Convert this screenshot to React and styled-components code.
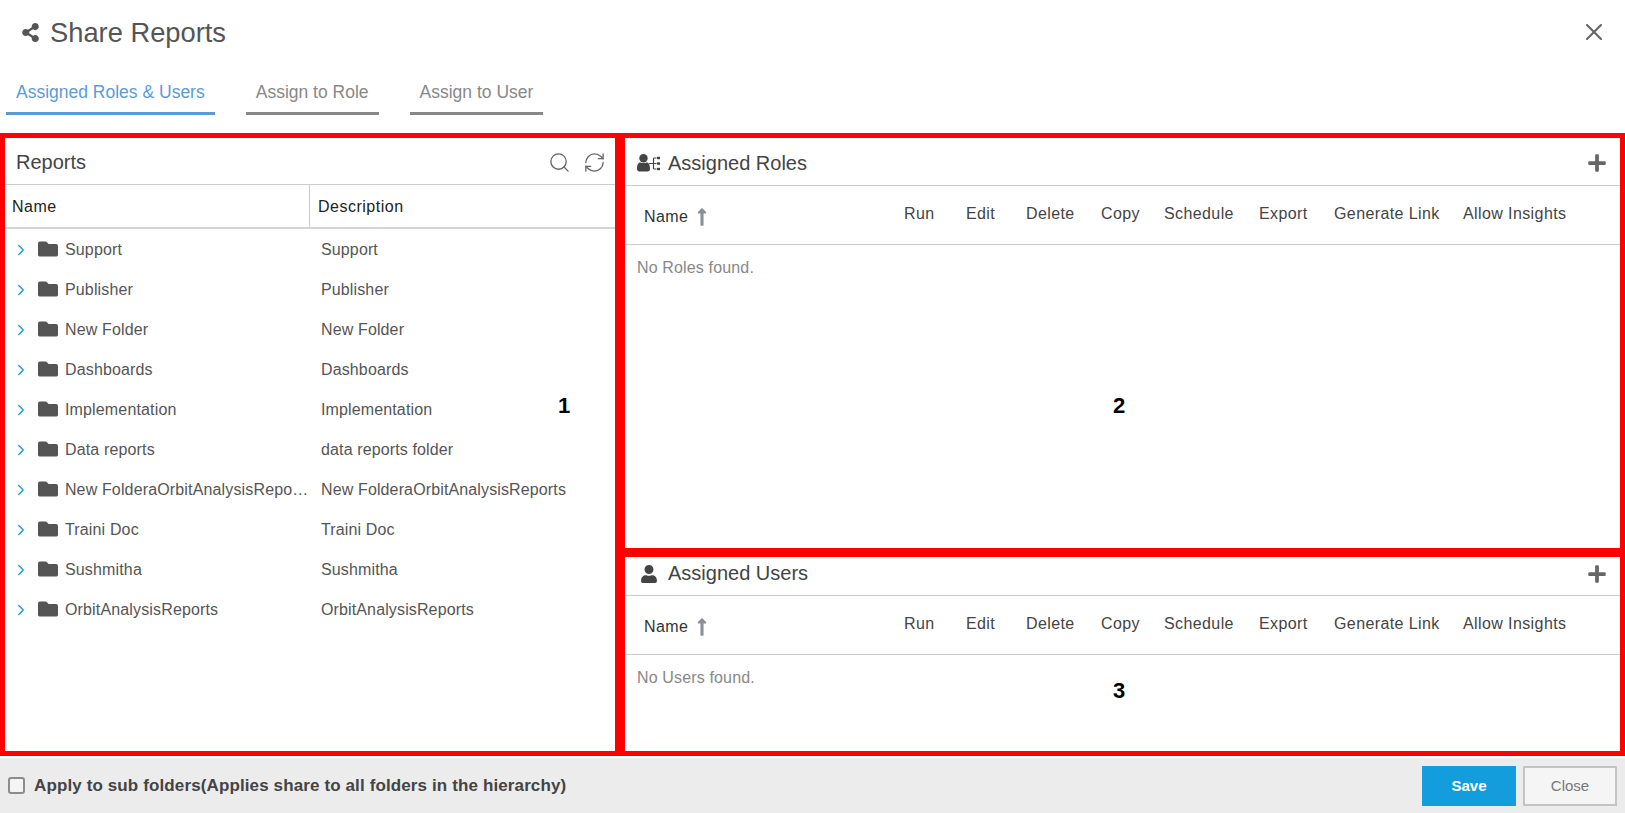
import React from 'react'
import styled, { createGlobalStyle } from 'styled-components'
import { FaShareAlt, FaFolder, FaPlus, FaUser, FaLongArrowAltUp } from 'react-icons/fa'
import { ChevronRight, RefreshCw, Search, X } from 'lucide-react'

const folders = [
    ['Support', 'Support'],
    ['Publisher', 'Publisher'],
    ['New Folder', 'New Folder'],
    ['Dashboards', 'Dashboards'],
    ['Implementation', 'Implementation'],
    ['Data reports', 'data reports folder'],
    ['New FolderaOrbitAnalysisReports', 'New FolderaOrbitAnalysisReports'],
    ['Traini Doc', 'Traini Doc'],
    ['Sushmitha', 'Sushmitha'],
    ['OrbitAnalysisReports', 'OrbitAnalysisReports'],
]

const permissions = ['Run', 'Edit', 'Delete', 'Copy', 'Schedule', 'Export', 'Generate Link', 'Allow Insights']

function RolesIcon() {
    return (
        <svg width="25" height="18" viewBox="0 0 25 18" fill="#444">
            <circle cx="6.5" cy="4.2" r="4.2" />
            <path d="M0 15c0-5 1.500-6.500 3.500-6.500 1 .8 5 .8 6 0 2 0 3.500 1.500 3.500 6.500 0 1.500-1 2.500-2.500 2.500h-8C1 17.500 0 16.500 0 15z" />
            <path d="M12 9.500h4.500M16.500 4v11M16.500 4h3M16.500 9.500h3M16.500 15h3" stroke="#444" strokeWidth="1.200" fill="none" />
            <rect x="20" y="2.800" width="3" height="2.400" />
            <rect x="20" y="8.300" width="3" height="2.400" />
            <rect x="20" y="13.800" width="3" height="2.400" />
        </svg>
    )
}

function AssignedTable({ empty }) {
    return (
        <>
            <TableHead>
                <NameHead>
                    Name
                    <FaLongArrowAltUp color="#8a9099" size={20} />
                </NameHead>
                <Permissions>
                    {permissions.map(item => (
                        <span key={item}>{item}</span>
                    ))}
                </Permissions>
            </TableHead>
            <EmptyText>{empty}</EmptyText>
        </>
    )
}

function App() {
    return (
        <Page>
            <GlobalStyle />
            <TitleBar>
                <Title>
                    <FaShareAlt size={19} color="#555" />
                    Share Reports
                </Title>
                <CloseIcon>
                    <X size={28} strokeWidth={1.8} color="#666" />
                </CloseIcon>
            </TitleBar>

            <Tabs>
                <Tab $active>Assigned Roles &amp; Users</Tab>
                <Tab>Assign to Role</Tab>
                <Tab>Assign to User</Tab>
            </Tabs>

            <Body>
                <ReportsPanel>
                    <ReportsHeader>
                        Reports
                        <HeaderTools>
                            <Search size={23} strokeWidth={1.4} />
                            <RefreshCw size={23} strokeWidth={1.4} />
                        </HeaderTools>
                    </ReportsHeader>
                    <ColumnHeads>
                        <ColumnName>Name</ColumnName>
                        <ColumnDescription>Description</ColumnDescription>
                    </ColumnHeads>
                    {folders.map(([name, description]) => (
                        <FolderRow key={name}>
                            <FolderName>
                                <ChevronRight size={18} color="#1a9bdc" strokeWidth={1.8} />
                                <FolderIcon><FaFolder size={20} color="#555" /></FolderIcon>
                                <FolderLabel>{name}</FolderLabel>
                            </FolderName>
                            <FolderDescription>{description}</FolderDescription>
                        </FolderRow>
                    ))}
                    <Marker $left={559} $top={268}>1</Marker>
                </ReportsPanel>

                <RightColumn>
                    <RolesPanel>
                        <AssignedHeader $height={47} $top={3} $bottom={0}>
                            <AssignedTitle>
                                <IconSlot><RolesIcon /></IconSlot>
                                Assigned Roles
                            </AssignedTitle>
                            <FaPlus size={20} color="#666" />
                        </AssignedHeader>
                        <AssignedTable empty="No Roles found." />
                        <Marker $left={494} $top={268}>2</Marker>
                    </RolesPanel>
                    <UsersPanel>
                        <AssignedHeader $height={38} $top={0} $bottom={5}>
                            <AssignedTitle>
                                <IconSlot><FaUser size={18} color="#444" /></IconSlot>
                                Assigned Users
                            </AssignedTitle>
                            <FaPlus size={20} color="#666" />
                        </AssignedHeader>
                        <AssignedTable empty="No Users found." />
                        <Marker $left={494} $top={134}>3</Marker>
                    </UsersPanel>
                </RightColumn>
            </Body>

            <Footer>
                <ApplyLabel>
                    <CheckBox />
                    Apply to sub folders(Applies share to all folders in the hierarchy)
                </ApplyLabel>
                <Buttons>
                    <SaveButton>Save</SaveButton>
                    <CloseButton>Close</CloseButton>
                </Buttons>
            </Footer>
        </Page>
    )
}

export default App

const GlobalStyle = createGlobalStyle`
    html, body {
        margin: 0;
        padding: 0;
        background: #fff;
    }
    * {
        box-sizing: border-box;
    }
`

const Page = styled.div`
    width: 1625px;
    height: 813px;
    display: flex;
    flex-direction: column;
    overflow: hidden;
    font-family: "Liberation Sans", Arial, sans-serif;
    color: #555;
`

const TitleBar = styled.div`
    height: 62px;
    display: flex;
    align-items: center;
    justify-content: space-between;
    padding: 3px 17px 0 21px;
`

const Title = styled.div`
    display: flex;
    align-items: center;
    gap: 10px;
    font-size: 27.3px;
    color: #555;
`

const CloseIcon = styled.div`
    display: flex;
    margin-top: -2px;
`

const Tabs = styled.div`
    height: 53px;
    display: flex;
    gap: 31px;
    padding-left: 6px;
`

const Tab = styled.div`
    height: 53px;
    padding: 20px 10px 0;
    font-size: 17.5px;
    color: ${props => (props.$active ? '#5b9bd5' : '#888')};
    border-bottom: 3px solid ${props => (props.$active ? '#5b9bd5' : '#888')};
`

const Body = styled.div`
    margin-top: 18px;
    height: 623px;
    display: grid;
    grid-template-columns: 620px 1005px;
`

const ReportsPanel = styled.div`
    position: relative;
    border: 5px solid #f00;
`

const ReportsHeader = styled.div`
    height: 47px;
    display: flex;
    align-items: center;
    justify-content: space-between;
    padding: 2px 9px 0 11px;
    font-size: 20px;
    color: #444;
    border-bottom: 1px solid #ccc;
`

const HeaderTools = styled.div`
    display: flex;
    gap: 12px;
    color: #666;
`

const ColumnHeads = styled.div`
    height: 44px;
    display: grid;
    grid-template-columns: 305px 1fr;
    border-bottom: 2px solid #d4d4d4;
    font-size: 16px;
    letter-spacing: 0.5px;
    color: #222;
`

const ColumnName = styled.div`
    display: flex;
    align-items: center;
    padding: 2px 0 0 7px;
    border-right: 1px solid #ccc;
`

const ColumnDescription = styled.div`
    display: flex;
    align-items: center;
    padding: 2px 0 0 8px;
`

const FolderRow = styled.div`
    height: 40px;
    display: grid;
    grid-template-columns: 305px 1fr;
    align-items: center;
    padding-top: 2px;
    font-size: 16px;
    letter-spacing: 0.15px;
    color: #555;
`

const FolderName = styled.div`
    display: flex;
    align-items: center;
    padding: 0 1px 0 7px;
    gap: 7px;
    min-width: 0;
`

const FolderIcon = styled.span`
    display: flex;
    margin: -3px 0 0 1px;
`

const FolderLabel = styled.span`
    overflow: hidden;
    white-space: nowrap;
    text-overflow: ellipsis;
`

const FolderDescription = styled.div`
    padding-left: 11px;
    letter-spacing: 0.13px;
`

const RightColumn = styled.div`
    display: flex;
    flex-direction: column;
`

const RolesPanel = styled.div`
    position: relative;
    height: 420px;
    border: 5px solid #f00;
`

const UsersPanel = styled.div`
    position: relative;
    height: 203px;
    border: 5px solid #f00;
    border-top-width: 4px;
`

const AssignedHeader = styled.div`
    height: ${props => props.$height + 1}px;
    display: flex;
    align-items: center;
    justify-content: space-between;
    padding: ${props => props.$top}px 13px ${props => props.$bottom}px 11px;
    border-bottom: 1px solid #ccc;
`

const AssignedTitle = styled.div`
    display: flex;
    align-items: center;
    font-size: 20px;
    color: #444;
`

const IconSlot = styled.span`
    width: 32px;
    display: flex;
    justify-content: center;
    padding-right: 6px;
`

const TableHead = styled.div`
    height: 59px;
    display: flex;
    align-items: center;
    justify-content: space-between;
    border-bottom: 1px solid #ccc;
    padding: 0 0 0 19px;
    font-size: 16px;
    letter-spacing: 0.4px;
    color: #444;
`

const NameHead = styled.div`
    display: flex;
    align-items: center;
    gap: 4px;
    padding-top: 4px;
    color: #333;
`

const Permissions = styled.div`
    display: grid;
    grid-template-columns: 62px 60px 75px 63px 95px 75px 129px 157px;
    margin-top: -3px;
`

const EmptyText = styled.div`
    padding: 14px 12px;
    font-size: 16px;
    letter-spacing: 0.15px;
    color: #888;
`

const Marker = styled.div`
    position: absolute;
    left: ${props => props.$left}px;
    top: ${props => props.$top}px;
    transform: translate(-50%, -50%);
    font-size: 22px;
    font-weight: bold;
    color: #000;
`

const Footer = styled.div`
    margin-top: 2px;
    flex: 1;
    display: flex;
    align-items: center;
    justify-content: space-between;
    padding: 0 8px;
    background: #ececec;
`

const ApplyLabel = styled.div`
    display: flex;
    align-items: center;
    gap: 9px;
    font-size: 17px;
    letter-spacing: 0.12px;
    font-weight: bold;
    color: #444;
`

const CheckBox = styled.span`
    width: 17px;
    height: 17px;
    border: 2px solid #8c8c8c;
    border-radius: 3px;
    background: #f4f4f4;
`

const Buttons = styled.div`
    display: flex;
    gap: 7px;
`

const SaveButton = styled.div`
    width: 94px;
    height: 40px;
    display: flex;
    align-items: center;
    justify-content: center;
    background: #149ddd;
    color: #fff;
    font-size: 15px;
    font-weight: bold;
`

const CloseButton = styled.div`
    width: 94px;
    height: 40px;
    display: flex;
    align-items: center;
    justify-content: center;
    background: #f5f5f5;
    border: 2px solid #c4c4c4;
    color: #777;
    font-size: 15px;
`
